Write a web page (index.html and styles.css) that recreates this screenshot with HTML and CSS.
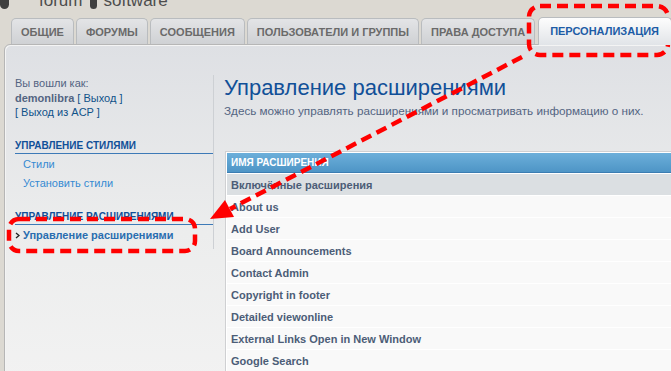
FILE: index.html
```html
<!DOCTYPE html>
<html lang="ru">
<head>
    <meta charset="UTF-8">
    <title>Управление расширениями</title>
    <link rel="stylesheet" href="styles.css">
</head>
<body>
<div class="page">

    <!-- Logo, cut by the top of the window -->
    <div class="logo">
        <span class="bubble"></span>
        <span class="logo-word">forum</span>
        <span class="bubble small"></span>
        <span class="logo-word">software</span>
    </div>

    <!-- Tabs -->
    <ul class="tabs">
        <li>Общие</li>
        <li>Форумы</li>
        <li>Сообщения</li>
        <li>Пользователи и группы</li>
        <li>Права доступа</li>
        <li class="active">Персонализация</li>
    </ul>

    <div class="panel">
        <!-- Left menu -->
        <div class="menu">
            <p class="login">
                Вы вошли как:<br>
                <b>demonlibra</b> <a href="#">[ Выход ]</a><br>
                <a href="#">[ Выход из ACP ]</a>
            </p>

            <div class="menu-block">
                <h3>Управление стилями</h3>
                <ul>
                    <li><a href="#">Стили</a></li>
                    <li><a href="#">Установить стили</a></li>
                </ul>
            </div>

            <div class="menu-block">
                <h3>Управление расширениями</h3>
                <ul>
                    <li class="current">
                        <svg class="bullet" width="5" height="7" viewBox="0 0 5 7"><polyline points="1,1 4,3.5 1,6" fill="none" stroke="#222" stroke-width="1.3"/></svg>
                        <a href="#">Управление расширениями</a>
                    </li>
                </ul>
            </div>
        </div>

        <!-- Main content -->
        <div class="main">
            <h1>Управление расширениями</h1>
            <p class="intro">Здесь можно управлять расширениями и просматривать информацию о них.</p>

            <table class="ext-table">
                <thead>
                    <tr><th>Имя расширения</th></tr>
                </thead>
                <tbody>
                    <tr class="group"><td>Включённые расширения</td></tr>
                    <tr><td>About us</td></tr>
                    <tr><td>Add User</td></tr>
                    <tr><td>Board Announcements</td></tr>
                    <tr><td>Contact Admin</td></tr>
                    <tr><td>Copyright in footer</td></tr>
                    <tr><td>Detailed viewonline</td></tr>
                    <tr><td>External Links Open in New Window</td></tr>
                    <tr><td>Google Search</td></tr>
                </tbody>
            </table>
        </div>
    </div>

    <!-- Red dashed annotation drawn over the screenshot -->
    <svg class="annot" width="671" height="371" viewBox="0 0 671 371">
        <g fill="none" stroke="#f00" stroke-width="4.5" stroke-dasharray="11 6">
            <rect x="529" y="6" width="139" height="49" rx="11"/>
            <rect x="9" y="219" width="186" height="32" rx="10"/>
            <line x1="522" y1="57" x2="230" y2="209"/>
        </g>
        <polygon points="210,219 225,200 234,217" fill="#f00"/>
    </svg>
</div>
</body>
</html>
```

FILE: styles.css
```css
body {
    margin: 0;
    background-color: #dcd9d2;
    font-family: "Liberation Sans", Arial, sans-serif;
    overflow: hidden;
}

.page {
    position: relative;
    width: 671px;
    height: 371px;
    overflow: hidden;
}

/* Logo */
.logo {
    display: flex;
    align-items: flex-end;
    gap: 6px;
    height: 9px;
    overflow: hidden;
    color: #4d4d4d;
    font-size: 17px;
    line-height: 17px;
}

.bubble {
    width: 9px;
    height: 14px;
    margin-right: 24px;
    border-radius: 0 0 6px 6px;
    background: #3f3f3f;
}

.bubble.small {
    width: 7px;
    margin: 0 0 0 2px;
}

/* Tabs */
.tabs {
    display: flex;
    align-items: flex-end;
    gap: 2px;
    list-style: none;
    margin: 8px 0 0;
    padding: 0 0 0 11px;
    white-space: nowrap;
}

.tabs li {
    flex-shrink: 0;
    height: 25px;
    line-height: 26px;
    padding: 0 9px;
    border: 1px solid #b9bcbf;
    border-bottom: none;
    border-radius: 5px 5px 0 0;
    background: linear-gradient(#e3e4e6, #cfd1d4);
    color: #6a6a6a;
    font-size: 11px;
    font-weight: bold;
    text-transform: uppercase;
}

.tabs li.active {
    height: 27px;
    margin-left: 1px;
    margin-bottom: -1px;
    padding: 0 12px 0 11px;
    position: relative;
    z-index: 1;
    background: linear-gradient(#fdfdfd, #e1e4e8);
    color: #1d5ca6;
}

/* Panel */
.panel {
    display: flex;
    align-items: flex-start;
    width: 900px;
    height: 340px;
    margin-left: 4px;
    border: 1px solid #b6b6b6;
    border-radius: 6px 0 0 0;
    background: linear-gradient(#dee0e4, #eceded 55%, #f2f2f2);
    box-shadow: inset 1px 1px 0 #f4f4f4;
}

/* Left menu */
.menu {
    width: 200px;
    margin-top: 30px;
    padding: 1px 0 4px 10px;
    border-right: 1px solid #cdd0d4;
    font-size: 11px;
    color: #536482;
}

.login {
    margin: 0;
    line-height: 14.5px;
}

.login a {
    color: #105289;
    text-decoration: none;
}

.menu-block h3 {
    margin: 20px 0 0;
    padding-bottom: 1px;
    border-bottom: 1px solid #3d7ab7;
    color: #115098;
    font-size: 10px;
    line-height: 12px;
    text-transform: uppercase;
}

.menu-block + .menu-block h3 {
    margin-top: 18px;
}

.menu-block ul {
    list-style: none;
    margin: 0;
    padding: 1px 0 0;
}

.menu-block li {
    line-height: 19px;
    padding-left: 8px;
    position: relative;
}

.menu-block a {
    color: #368ad2;
    text-decoration: none;
}

.menu-block li.current a {
    color: #2a6db0;
    font-weight: bold;
}

.bullet {
    position: absolute;
    left: 0;
    top: 6px;
}

/* Main content */
.main {
    flex: 1;
    padding-left: 10px;
    padding-top: 30px;
}

.main h1 {
    margin: 0;
    color: #115098;
    font-size: 22px;
    font-weight: normal;
    line-height: 26px;
}

.intro {
    margin: 3px 0 0;
    color: #536482;
    font-size: 11.7px;
}

.ext-table {
    width: 680px;
    margin: 34px 0 0 1px;
    padding: 1px;
    border: 1px solid #cfd0d2;
    border-spacing: 0;
    background: #fff;
    font-size: 11px;
}

.ext-table th {
    height: 19px;
    padding: 0 4px;
    border-bottom: 1px solid #3b7db2;
    background: linear-gradient(#6cafda, #4e95c6);
    color: #fff;
    font-size: 10px;
    text-align: left;
    text-transform: uppercase;
}

.ext-table td {
    height: 21px;
    padding: 0 4px;
    border-top: 1px solid #fff;
    background: #f9f9f9;
    color: #4c5d77;
    font-weight: bold;
}

.ext-table tr.group td {
    background: #dbdfe2;
}

/* Annotation overlay */
.annot {
    position: absolute;
    left: 0;
    top: 0;
    pointer-events: none;
}
```
